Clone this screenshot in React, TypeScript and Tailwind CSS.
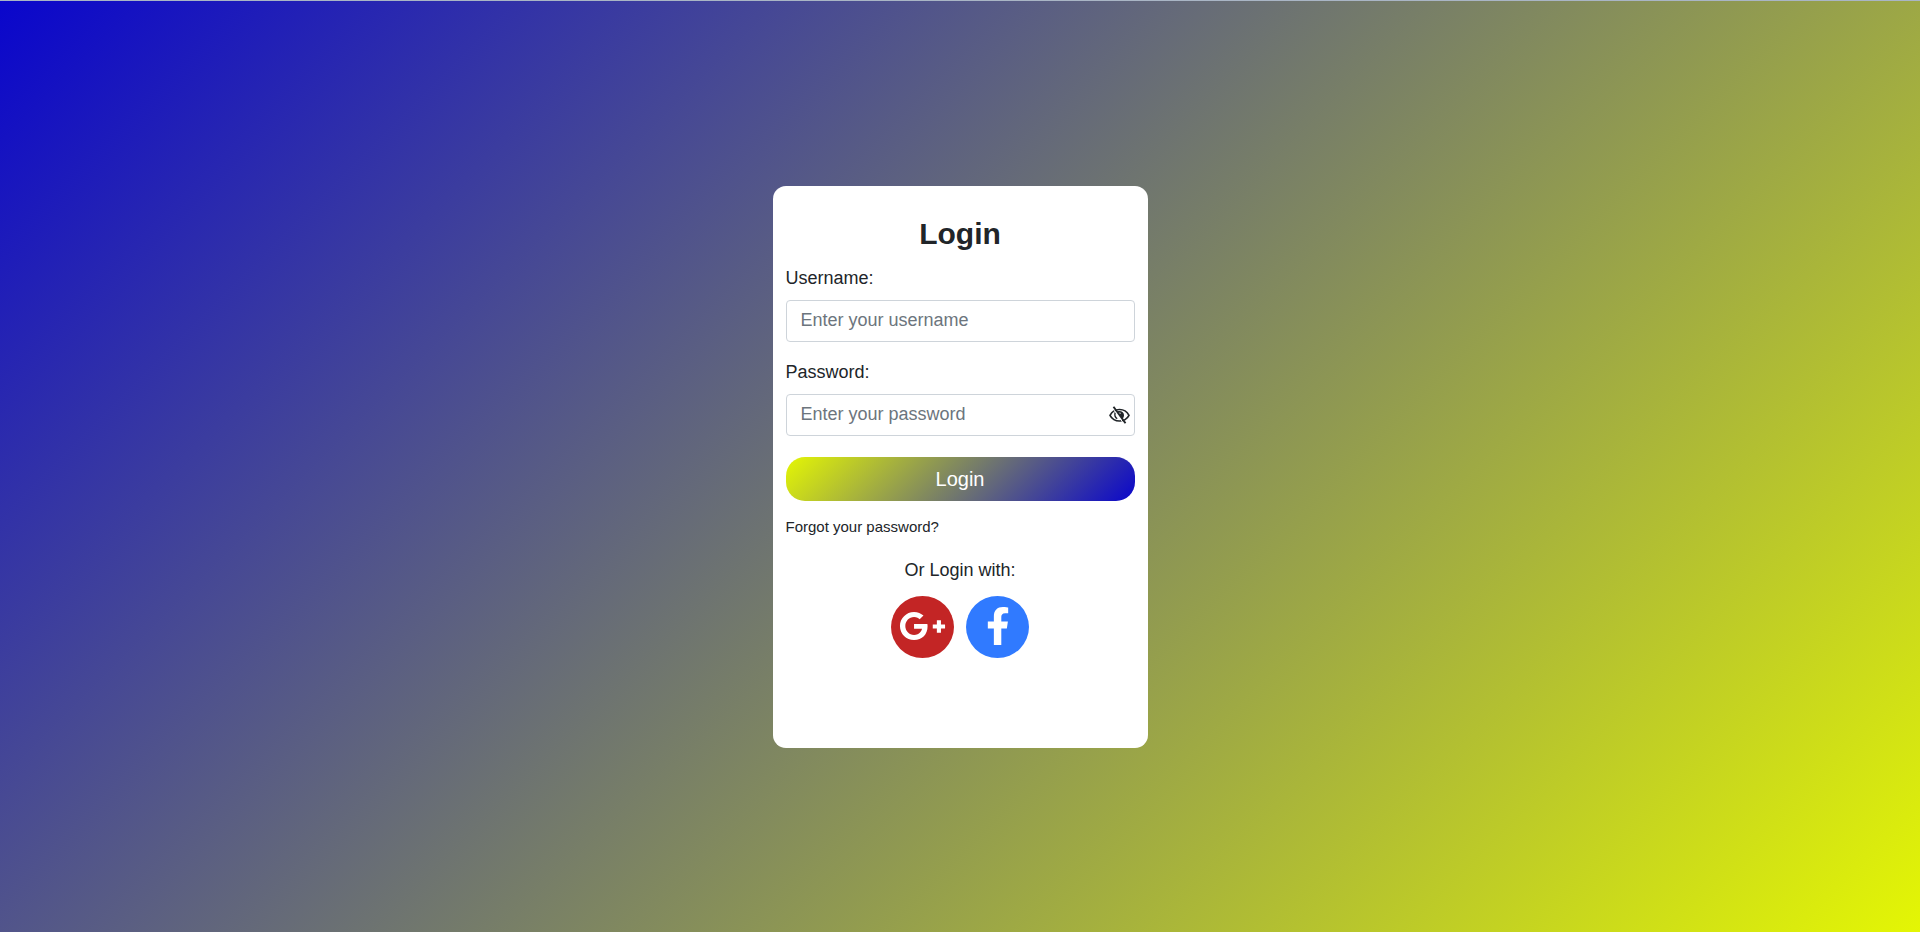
import { useState } from "react";
import { FaFacebookF, FaGooglePlusG } from "react-icons/fa";

function EyeSlashIcon() {
  return (
    <svg viewBox="0 0 21 18" className="h-[18px] w-[21px]" fill="none" stroke="currentColor" aria-hidden="true">
      <path d="M1 9.3C3 5.6 6.4 3.5 10.5 3.5s7.5 2.1 9.5 5.8c-2 3.7-5.4 5.7-9.5 5.7S3 13 1 9.3Z" strokeWidth="1.7" strokeLinejoin="round" />
      <path d="M6.3 6.2c-.9 2.4-.3 5 1.9 6.6" strokeWidth="1.4" />
      <path d="M8.6 5.4c2.8-1.2 6.2.6 6.4 3.5.1 1.5-.5 2.9-1.7 3.9Z" fill="currentColor" stroke="none" />
      <circle cx="10.9" cy="7.2" r="0.8" fill="#fff" stroke="none" />
      <path d="M3.2 1.6 15 18" stroke="#fff" strokeWidth="1" />
      <path d="M4.5 0.7 16.5 17.3" strokeWidth="1.9" />
    </svg>
  );
}

const inputClass =
  "h-[42px] w-full rounded-[4px] border border-[#ced4da] bg-white pr-8 pl-3.5 text-[18px] leading-[27px] text-[#212529] placeholder:text-[#6c757d] placeholder:opacity-100";
const labelClass = "mb-2 block text-[18px] leading-[27px]";

export default function App() {
  const [visible, setVisible] = useState(false);

  return (
    <main className="flex min-h-screen items-center justify-center border-t border-[#a9b5c5] bg-[linear-gradient(135deg,#0a06cc,#e4f604)] font-['Liberation_Sans',Arial,sans-serif] text-[#212529]">
      <section className="min-h-[562px] w-full max-w-[375px] rounded-[13px] bg-white px-[13px] pt-[30px] pb-3">
        <h1 className="mb-[13px] text-center text-[30px] leading-9 font-bold">Login</h1>
        <form onSubmit={(event) => event.preventDefault()}>
          <div className="mb-[17px]">
            <label htmlFor="username" className={labelClass}>
              Username:
            </label>
            <input id="username" type="text" placeholder="Enter your username" className={inputClass} />
          </div>
          <div className="mb-[21px]">
            <label htmlFor="password" className={labelClass}>
              Password:
            </label>
            <div className="relative">
              <input
                id="password"
                type={visible ? "text" : "password"}
                placeholder="Enter your password"
                className={inputClass}
              />
              <button
                type="button"
                aria-label="Toggle password visibility"
                onClick={() => setVisible(!visible)}
                className="absolute inset-y-0 right-[5px] flex items-center"
              >
                <EyeSlashIcon />
              </button>
            </div>
          </div>
          <button
            type="submit"
            className="h-11 w-full rounded-[19px] bg-[linear-gradient(135deg,#e4f604,#0a06cc)] text-[20px] leading-[30px] text-white"
          >
            Login
          </button>
        </form>
        <a href="#forgot" className="mt-[15px] block text-[15px] leading-[22px]">
          Forgot your password?
        </a>
        <p className="mt-[19px] text-center text-[18px] leading-[27px]">Or Login with:</p>
        <div className="mt-3 flex justify-center gap-3">
          <a
            href="#google"
            aria-label="Google Plus"
            className="flex h-[62px] w-[63px] items-center justify-center rounded-[50%] bg-[#c32525] pb-0.5 text-white"
          >
            <FaGooglePlusG className="h-[38px] w-[47px]" />
          </a>
          <a
            href="#facebook"
            aria-label="Facebook"
            className="flex h-[62px] w-[63px] items-center justify-center rounded-[50%] bg-[#307aff] pb-0.5 text-white"
          >
            <FaFacebookF className="h-[38px] w-6" />
          </a>
        </div>
      </section>
    </main>
  );
}
